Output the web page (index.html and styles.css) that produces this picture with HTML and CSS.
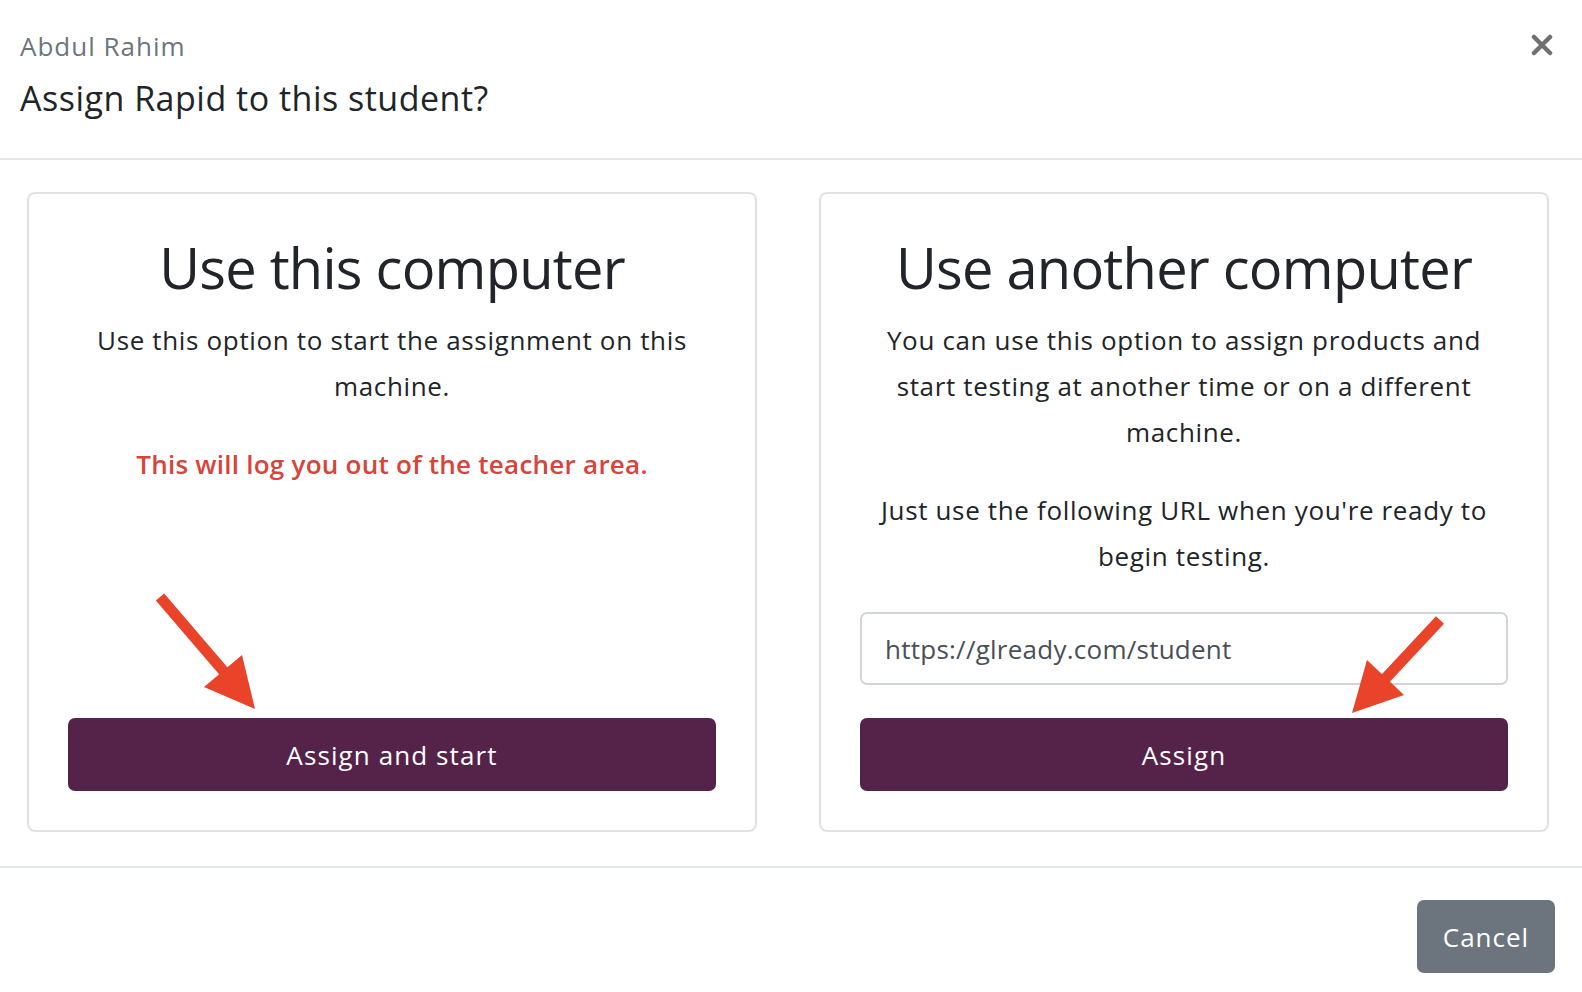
FILE: index.html
```html
<!DOCTYPE html>
<html lang="en">
<head>
<meta charset="utf-8">
<title>Assign Rapid</title>
<link rel="stylesheet" href="styles.css">
</head>
<body>
<div class="modal">
  <header class="modal-header">
    <div class="titles">
      <div class="subtitle">Abdul Rahim</div>
      <h1 class="title">Assign Rapid to this student?</h1>
    </div>
    <button class="close" aria-label="Close">
      <svg width="22" height="22" viewBox="0 0 22 22"><path d="M3 3 L19 19 M19 3 L3 19" stroke="#707070" stroke-width="4.5" stroke-linecap="round"/></svg>
    </button>
  </header>
  <main class="modal-body">
    <section class="card">
      <h2 class="card-title">Use this computer</h2>
      <p class="text">Use this option to start the assignment on this machine.</p>
      <p class="text warn">This will log you out of the teacher area.</p>
      <button class="btn-primary">Assign and start</button>
    </section>
    <section class="card">
      <h2 class="card-title">Use another computer</h2>
      <p class="text">You can use this option to assign products and start testing at another time or on a different machine.</p>
      <p class="text">Just use the following URL when you're ready to begin testing.</p>
      <div class="url-input">https://glready.com/student</div>
      <button class="btn-primary">Assign</button>
    </section>
  </main>
  <footer class="modal-footer">
    <button class="btn-secondary">Cancel</button>
  </footer>
  <svg class="arrows" width="1582" height="992" viewBox="0 0 1582 992">
    <line x1="160" y1="597" x2="226" y2="674" stroke="#e9432a" stroke-width="11"/>
    <polygon points="255,709 242,655 204,687" fill="#e9432a"/>
    <line x1="1440" y1="620" x2="1384" y2="680" stroke="#e9432a" stroke-width="11"/>
    <polygon points="1352,713 1367,660 1404,695" fill="#e9432a"/>
  </svg>
</div>
</body>
</html>
```
FILE: styles.css
```css
* { box-sizing: border-box; }
html, body { margin: 0; padding: 0; background: #fff; }
body {
  font-family: "Open Sans", "Lato", "DejaVu Sans", sans-serif;
  color: #212529;
  width: 1582px;
  height: 992px;
  overflow: hidden;
}
.modal { position: relative; }
.modal-header {
  display: flex;
  justify-content: space-between;
  align-items: flex-start;
  padding: 30px 20px 40px 20px;
  border-bottom: 2px solid #e4e7ea;
  height: 160px;
}
.subtitle {
  font-size: 26px;
  line-height: 32px;
  color: #6c757d;
  letter-spacing: 1px;
}
.title {
  margin: 16px 0 0 0;
  font-size: 34px;
  line-height: 40px;
  font-weight: 400;
  color: #212529;
  letter-spacing: 0.5px;
}
.close {
  border: 0;
  background: none;
  padding: 0;
  margin: 4px 9px 0 0;
  width: 22px;
  height: 22px;
  cursor: pointer;
}
.close svg { display: block; }
.modal-body {
  display: grid;
  grid-template-columns: 730px 730px;
  column-gap: 62px;
  padding: 32px 33px 34px 27px;
}
.card {
  border: 2px solid #e1e1e1;
  border-radius: 8px;
  padding: 40px 39px 39px 39px;
  display: flex;
  flex-direction: column;
  align-items: stretch;
  text-align: center;
  height: 640px;
}
.card-title {
  margin: 0;
  font-size: 56px;
  line-height: 67px;
  font-weight: 400;
  letter-spacing: -0.75px;
}
.text {
  margin: 16px 0 16px 0;
  font-size: 26px;
  line-height: 46px;
  letter-spacing: 0.65px;
}
.text + .text { margin-top: 16px; }
.warn {
  color: #d8433a;
  font-weight: 600;
  letter-spacing: 0.25px;
}
.url-input {
  margin-top: 17px;
  height: 73px;
  border: 2px solid #d2d6da;
  border-radius: 7px;
  padding: 0 23px;
  display: flex;
  align-items: center;
  text-align: left;
  font-size: 26px;
  color: #495057;
  letter-spacing: 0.25px;
}
.btn-primary {
  margin-top: auto;
  height: 73px;
  border: 0;
  border-radius: 7px;
  background: #55234a;
  color: #fff;
  font-family: inherit;
  font-size: 26px;
  letter-spacing: 1.1px;
}
.url-input + .btn-primary { margin-top: 33px; }
.modal-footer {
  border-top: 2px solid #e4e7ea;
  display: flex;
  justify-content: flex-end;
  padding: 32px 27px 0 0;
}
.btn-secondary {
  width: 138px;
  height: 73px;
  border: 0;
  border-radius: 7px;
  background: #6c757d;
  color: #fff;
  font-family: inherit;
  font-size: 26px;
  letter-spacing: 1px;
}
.arrows {
  position: absolute;
  left: 0;
  top: 0;
  pointer-events: none;
}
```
